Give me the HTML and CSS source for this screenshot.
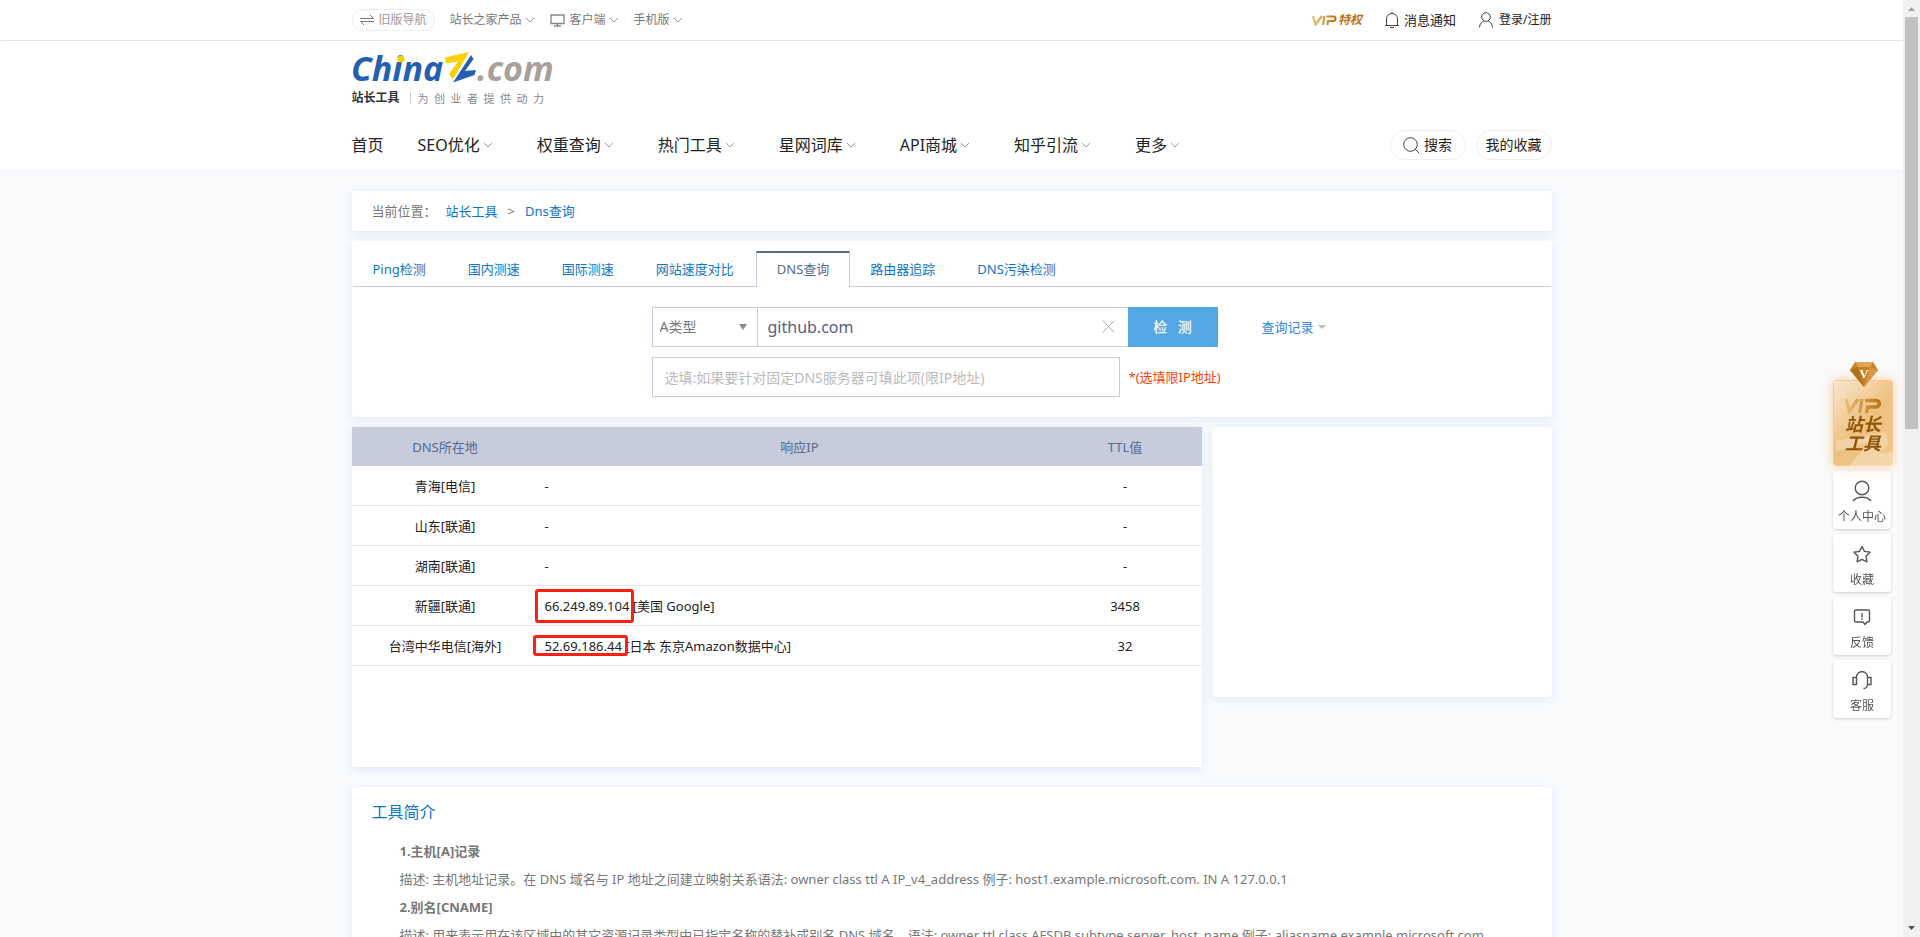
FILE: index.html
```html
<!DOCTYPE html>
<html lang="zh-CN">
<head>
<meta charset="utf-8">
<title>DNS查询 - 站长工具</title>
<meta name="viewport" content="width=device-width, initial-scale=1">
<link rel="stylesheet" href="styles.css">
</head>
<body>
<svg class="defs" aria-hidden="true">
  <symbol id="chevron" viewBox="0 0 10 6"><path d="M1 1l4 4 4-4" fill="none" stroke="currentColor"/></symbol>
  <linearGradient id="gold" x1="0" x2="1" y1="0" y2="0"><stop offset="0" stop-color="#e9bc74"/><stop offset="1" stop-color="#b8741a"/></linearGradient>
</svg>
<div class="page">
  <div class="topbar">
    <div class="wrap topbar-row">
      <nav class="top-left" aria-label="站点">
        <a class="old-nav" href="#"><svg width="14" height="12" viewBox="0 0 14 12"><path d="M0 4.500h13.500M10 1l3.500 3.500M14 7.500H.5M4 11L.5 7.500" fill="none" stroke="#777"/></svg>旧版导航</a>
        <a class="top-link product" href="#">站长之家产品<svg class="chev"><use href="#chevron"/></svg></a>
        <a class="top-link client" href="#"><svg class="monitor" width="15" height="13" viewBox="0 0 15 13"><path d="M1 1h13v8.500H1zM7.500 9.500V12M4 12h7" fill="none" stroke="#888" stroke-width="1.400"/></svg>客户端<svg class="chev"><use href="#chevron"/></svg></a>
        <a class="top-link" href="#">手机版<svg class="chev"><use href="#chevron"/></svg></a>
      </nav>
      <div class="top-right">
        <a class="vip-link" href="#"><svg width="25" height="11" viewBox="0 0 25 11"><path d="M1 1l2.500 8.500L10 1M12.500 1L11 10M14.500 1.500h7c3 0 2.500 4.500-.5 4.500h-5l-.6 4" fill="none" stroke="url(#gold)" stroke-width="2.200"/></svg><span>特权</span></a>
        <a class="notice" href="#"><svg width="16" height="16" viewBox="0 0 16 16"><path d="M1 13.500h14M2.500 13.500V7C2.500 3.500 5 1.500 8 1.500S13.500 3.500 13.500 7v6.500M6 15.500h4M8 0v1.500" fill="none" stroke="#444"/></svg>消息通知</a>
        <a class="login" href="#"><svg width="16" height="16" viewBox="0 0 16 16"><circle cx="8" cy="5" r="4.300" fill="none" stroke="#444"/><path d="M1.500 15.500C1.700 11.500 4 9.500 6 9M14.500 15.500C14.300 11.500 12 9.500 10 9" fill="none" stroke="#444"/></svg>登录/注册</a>
      </div>
    </div>
  </div>
  <header class="header">
    <div class="wrap">
      <a class="logo" href="#" aria-label="ChinaZ.com 站长工具">
        <svg class="logo-mark" width="202" height="34" viewBox="0 0 202 34">
          <text class="logo-text" x="-1" y="29" fill="#2560b0">China</text>
          <circle cx="49" cy="7" r="3.500" fill="#fdd000"/>
          <path d="M93 5.500L117 0 101 27.500 97 22 106 9.500 94 11.500z" fill="#fdd000"/>
          <path d="M119 3l2.500 4L113 19l11-1-1.500 5L101 30.500z" fill="#2560b0"/>
          <text class="logo-text" x="125" y="29" fill="#a8a19b">.com</text>
        </svg>
        <span class="tagline"><b>站长工具</b><span class="slogan">为&ensp;创&ensp;业&ensp;者&ensp;提&ensp;供&ensp;动&ensp;力</span></span>
      </a>
      <div class="nav-row">
        <nav class="nav" aria-label="主导航">
          <a href="#">首页</a>
          <a class="more" href="#">SEO优化<svg class="chev"><use href="#chevron"/></svg></a>
          <a class="more" href="#">权重查询<svg class="chev"><use href="#chevron"/></svg></a>
          <a class="more" href="#">热门工具<svg class="chev"><use href="#chevron"/></svg></a>
          <a class="more" href="#">星网词库<svg class="chev"><use href="#chevron"/></svg></a>
          <a class="more" href="#">API商城<svg class="chev"><use href="#chevron"/></svg></a>
          <a class="more" href="#">知乎引流<svg class="chev"><use href="#chevron"/></svg></a>
          <a class="more" href="#">更多<svg class="chev"><use href="#chevron"/></svg></a>
        </nav>
        <div class="nav-tools">
          <button class="pill" type="button"><svg width="17" height="17" viewBox="0 0 17 17"><circle cx="7.500" cy="7.500" r="6.800" fill="none" stroke="#444"/><path d="M12.300 12.300l4 4" stroke="#444"/></svg>搜索</button>
          <button class="pill" type="button">我的收藏</button>
        </div>
      </div>
    </div>
  </header>

  <main class="wrap main">
    <nav class="card crumbs" aria-label="当前位置">
      <span>当前位置：</span><a href="#">站长工具</a><span class="sep">&gt;</span><a href="#">Dns查询</a>
    </nav>

    <section class="card query">
      <nav class="tabs" aria-label="检测工具">
        <a href="#">Ping检测</a><a href="#">国内测速</a><a href="#">国际测速</a><a href="#">网站速度对比</a><a class="active" href="#">DNS查询</a><a href="#">路由器追踪</a><a href="#">DNS污染检测</a>
      </nav>
      <form class="form">
        <div class="line">
          <span class="type-box">
            <select aria-label="记录类型"><option>A类型</option></select>
            <svg class="caret" width="8" height="6"><path d="M0 0h8L4 6z" fill="#888"/></svg>
          </span>
          <span class="host-box">
            <input type="text" value="github.com" aria-label="域名">
            <button class="clear" type="button" aria-label="清空"><svg width="13" height="13" viewBox="0 0 13 13"><path d="M.5.5l12 12M12.500.5l-12 12" stroke="#aaa"/></svg></button>
          </span>
          <button class="submit" type="submit">检&ensp; 测</button>
          <a class="history" href="#">查询记录<svg width="8" height="4"><path d="M0 0h8L4 4z" fill="#bbb"/></svg></a>
        </div>
        <div class="line">
          <input class="server" type="text" placeholder="选填:如果要针对固定DNS服务器可填此项(限IP地址)" aria-label="DNS服务器">
          <span class="hint">*(选填限IP地址)</span>
        </div>
      </form>
    </section>

    <div class="columns">
      <section class="card result">
        <table>
          <thead><tr><th class="c-place">DNS所在地</th><th class="c-ip">响应IP</th><th class="c-ttl">TTL值</th></tr></thead>
          <tbody>
            <tr><td>青海[电信]</td><td class="ip">-</td><td>-</td></tr>
            <tr><td>山东[联通]</td><td class="ip">-</td><td>-</td></tr>
            <tr><td>湖南[联通]</td><td class="ip">-</td><td>-</td></tr>
            <tr><td>新疆[联通]</td><td class="ip"><span class="mark tall">66.249.89.104</span> [美国 Google]</td><td>3458</td></tr>
            <tr><td>台湾中华电信[海外]</td><td class="ip"><span class="mark low">52.69.186.44</span> [日本 东京Amazon数据中心]</td><td>32</td></tr>
          </tbody>
        </table>
      </section>
      <aside class="card promo"></aside>
    </div>

    <section class="card intro">
      <h2>工具简介</h2>
      <h3>1.主机[A]记录</h3>
      <p>描述: 主机地址记录。在 DNS 域名与 IP 地址之间建立映射关系语法: owner class ttl A IP_v4_address 例子: host1.example.microsoft.com. IN A 127.0.0.1</p>
      <h3>2.别名[CNAME]</h3>
      <p>描述: 用来表示用在该区域中的其它资源记录类型中已指定名称的替补或别名 DNS 域名。语法: owner ttl class AFSDB subtype server_host_name 例子: aliasname.example.microsoft.com.</p>
    </section>
  </main>
</div>

<aside class="dock">
  <a class="dock-vip" href="#">
    <svg class="gem" width="28" height="25" viewBox="0 0 28 25"><path d="M5 0h18l5 8-14 17L0 8z" fill="#c58328"/><path d="M5 0h18l-3 5H8z" fill="#e0a658"/><path d="M0 8l8-3 6 20z" fill="#b0701d"/><path d="M28 8l-8-3-6 20z" fill="#d6993f"/><text x="14" y="16" text-anchor="middle" class="gem-v">V</text></svg>
    <svg class="stripes" width="60" height="86" viewBox="0 0 60 86"><path d="M2 60l50-9 2 12-22 23H14l22-25-34 9zM32 86l14-14 14-1v15z" fill="#fff" opacity=".28"/></svg>
    <svg class="vip-word" width="38" height="16" viewBox="0 0 38 16"><path d="M2 1l3.500 12L14 1M18 1l-2.500 14M21 2.500h11c5 0 4 6.500-.5 6.500h-8l-1 6" fill="none" stroke="url(#gold)" stroke-width="3.400"/></svg>
    <span>站长<br>工具</span>
  </a>
  <a class="dock-item" href="#"><svg width="20" height="22" viewBox="0 0 20 22"><circle cx="10" cy="8" r="6.800"/><path d="M1 21c4-5 14-5 18 0"/></svg>个人中心</a>
  <a class="dock-item" href="#"><svg width="20" height="22" viewBox="0 0 20 22"><path d="M10 3.500l2.500 4.900 5.500.9-3.900 4 .8 5.500-4.900-2.400-4.900 2.400.8-5.500L2 9.300l5.500-.9z" stroke-linejoin="round"/></svg>收藏</a>
  <a class="dock-item" href="#"><svg width="20" height="22" viewBox="0 0 20 22"><path d="M4 4h12q1.500 0 1.500 1.500v9q0 1.500-1.500 1.500h-1l-2 2.500-2-2.500H4q-1.500 0-1.500-1.500v-9Q2.500 4 4 4zM10 7v4.500M10 12.500v1.500"/></svg>反馈</a>
  <a class="dock-item" href="#"><svg width="20" height="22" viewBox="0 0 20 22"><path d="M4.500 16V8c0-7 11-7 11 0v8q-.5 3.500-4 3.500M4.500 8.500H1v7h3.500M15.500 8.500H19v7h-3.500"/></svg>客服</a>
</aside>
<div class="scrollbar" aria-hidden="true">
  <svg width="7" height="4"><path d="M0 4h7L3.500 0z" fill="#a3a3a3"/></svg>
  <i></i>
  <svg class="down" width="7" height="4"><path d="M0 0h7L3.500 4z" fill="#505050"/></svg>
</div>
</body>
</html>
```

FILE: styles.css
```css
* { box-sizing: border-box; }
html { scrollbar-width: none; }
body {
  margin: 0;
  background: #f9fafc;
  color: #222;
  font: 13px/20px "Noto Sans", "Noto Sans CJK SC", sans-serif;
}
a { color: inherit; text-decoration: none; }
button, input, select { font: inherit; color: inherit; }
svg { flex: none; }
.defs { position: absolute; width: 0; height: 0; }
.page { margin-right: 17px; }
.wrap { width: calc(100% - 32px); max-width: 1200px; margin: 0 auto; }
.chev { width: 10px; height: 6px; color: #999; }

/* top bar */
.topbar { background: #fff; border-bottom: 1px solid #e6e6e6; }
.topbar-row { display: flex; justify-content: space-between; height: 40px; }
.top-left, .top-right { display: flex; align-items: center; font-size: 12px; }
.top-left { color: #777; }
.top-left a, .top-right a { display: flex; align-items: center; }
.old-nav {
  height: 22px; gap: 5px; padding: 0 7px; margin-right: 15px;
  border: 1px solid #eee; border-radius: 11px; color: #999;
}
.top-link { gap: 3px; margin-right: 15px; }
.monitor { margin-right: 2px; }
.top-right { color: #222; }
.vip-link { color: #b8741a; font-weight: 700; font-style: italic; gap: 1px; margin-right: 22px; }
.notice { gap: 4px; font-size: 13px; margin-right: 22px; }
.login { gap: 5px; }

/* header */
.header { background: #fff; padding-top: 11px; box-shadow: 0 1px 3px rgba(60, 90, 130, .06); }
.logo { display: inline-flex; flex-direction: column; }
.logo-mark { overflow: visible; }
.logo-text { font: italic 700 34px "Open Sans", sans-serif; }
.tagline { display: flex; align-items: center; height: 24px; font-size: 12px; }
.tagline b { color: #333; padding-right: 10px; }
.slogan { font: 11px/12px "Noto Sans CJK SC", sans-serif; color: #888; border-left: 1px solid #ccc; padding-left: 7px; }
.nav-row { display: flex; justify-content: space-between; align-items: center; height: 50px; margin-top: 10px; }
.nav { display: flex; gap: 34px; font-size: 16px; }
.nav a { display: flex; align-items: center; gap: 3px; white-space: nowrap; }
.nav .more { padding-right: 10px; }
.nav-tools { display: flex; gap: 10px; }
.pill {
  display: flex; align-items: center; justify-content: center; gap: 4px;
  width: 76px; height: 30px; padding: 0; white-space: nowrap;
  border: 1px solid #eee; border-radius: 15px; background: #fff; font-size: 14px;
}

/* cards */
.main { padding-top: 21px; }
.card { background: #fff; border-radius: 3px; box-shadow: 0 2px 10px rgba(40, 130, 210, .14); }
.crumbs { display: flex; align-items: center; height: 40px; padding: 0 20px; color: #777; }
.crumbs a { color: #0f75c6; }
.crumbs span:first-child { padding-right: 9px; }
.crumbs .sep { padding: 0 10px; }

.query { margin-top: 10px; padding: 10px 1px 20px; }
.tabs { display: flex; border-bottom: 1px solid #c6ccdc; }
.tabs a { height: 35px; padding: 8px 22px 0 20px; line-height: 20px; color: #0f75c6; }
.tabs .active {
  height: 36px; margin-bottom: -1px; padding: 6px 20px 0; color: #566a8c; background: #fff;
  border: 1px solid #c6ccdc; border-top: 2px solid #566a8c; border-bottom: 0;
}
.form { display: flex; flex-direction: column; gap: 10px; padding: 20px 0 0 299px; }
.line { display: flex; align-items: center; height: 40px; }
.type-box, .host-box { position: relative; display: flex; height: 40px; border: 1px solid #c6ccdc; }
.type-box { width: 106px; }
.host-box { width: 370px; border-left: 0; border-right: 0; }
.type-box select, .host-box input { width: 100%; border: 0; background: none; outline: 0; }
.type-box select { appearance: none; padding: 0 7px; color: #777; font-size: 14px; }
.caret { position: absolute; right: 10px; top: 16px; pointer-events: none; }
.host-box input { padding: 0 36px 0 10px; font-size: 16px; color: #566080; }
.clear { position: absolute; right: 13px; top: 12px; display: flex; padding: 0; border: 0; background: none; }
.submit { width: 90px; height: 40px; padding: 0; border: 0; background: #55a7e3; color: #fff; font-size: 14px; font-weight: 500; }
.history { display: flex; align-items: center; gap: 4px; margin-left: 44px; color: #2f87e0; }
.server { width: 468px; height: 40px; padding: 0 12px; border: 1px solid #c6ccdc; background: #fff; font-size: 14px; outline: 0; }
.server::placeholder { color: #bbb; opacity: 1; }
.hint { margin-left: 9px; color: #ff4208; }

/* results */
.columns { display: flex; align-items: flex-start; gap: 10px; margin-top: 10px; }
.result { flex: 1; min-height: 340px; }
.promo { width: 340px; min-height: 270px; }
table { width: 100%; border-collapse: separate; border-spacing: 0; table-layout: fixed; }
th { height: 39px; padding: 0; background: #c6ccdc; color: #566a8c; font-weight: 400; }
.c-place { width: 22%; }
.c-ip { width: 60%; padding-left: 12px; }
.c-ttl { width: 18%; }
td { height: 40px; padding: 0; border-bottom: 1px solid #e6e6e6; text-align: center; }
.ip { padding-left: 6px; text-align: left; }
.mark { position: relative; }
.mark::after { content: ""; position: absolute; border: 3px solid #ff2015; border-radius: 3px; }
.tall::after { left: -10px; right: -5px; top: -8px; bottom: -8px; }
.low::after { left: -12px; right: -6px; top: -2px; bottom: -1px; }

/* introduction */
.intro { margin-top: 20px; padding: 10px 20px; color: #777; }
.intro h2 { margin: 0 0 10px; font-size: 16px; font-weight: 400; line-height: 30px; color: #0f75c6; }
.intro h3, .intro p { margin: 0; padding-left: 28px; font-size: 13px; line-height: 28px; }

/* floating shortcuts */
.dock { position: fixed; right: 27px; top: 380px; display: flex; flex-direction: column; gap: 5px; width: 60px; }
.dock-vip {
  position: relative; display: flex; flex-direction: column; align-items: center;
  height: 86px; padding-top: 17px; border: 1px solid #f3cb94; border-radius: 3px;
  background: linear-gradient(135deg, #f8e6cf, #eec181 50%, #f1c78b);
  box-shadow: 0 0 12px rgba(245, 170, 80, .6);
  color: #8f5509; font-size: 18px; line-height: 19px; font-weight: 700; font-style: italic;
}
.gem { position: absolute; top: -19px; left: 16px; }
.gem-v { font: 700 13px "Liberation Serif", serif; fill: #fff; }
.stripes { position: absolute; left: 0; top: 0; }
.vip-word { margin-bottom: 1px; }
.dock-vip span { position: relative; }
.dock-item {
  display: flex; flex-direction: column; align-items: center; gap: 5px;
  width: 58px; height: 58px; padding-top: 9px; border-radius: 4px; background: #fff;
  box-shadow: 0 1px 3px rgba(0, 0, 0, .18); color: #555; font-size: 12px;
}
.dock-item svg { fill: none; stroke: #555; stroke-width: 1.4; }

/* scroll track */
.scrollbar {
  position: fixed; top: 0; right: 0; bottom: 0; width: 17px; padding: 7px 0;
  display: flex; flex-direction: column; align-items: center; background: #f0f0f0;
}
.scrollbar i { width: 13px; height: 44vh; margin-top: 6px; background: #c1c1c1; }
.scrollbar .down { margin-top: auto; }
```
